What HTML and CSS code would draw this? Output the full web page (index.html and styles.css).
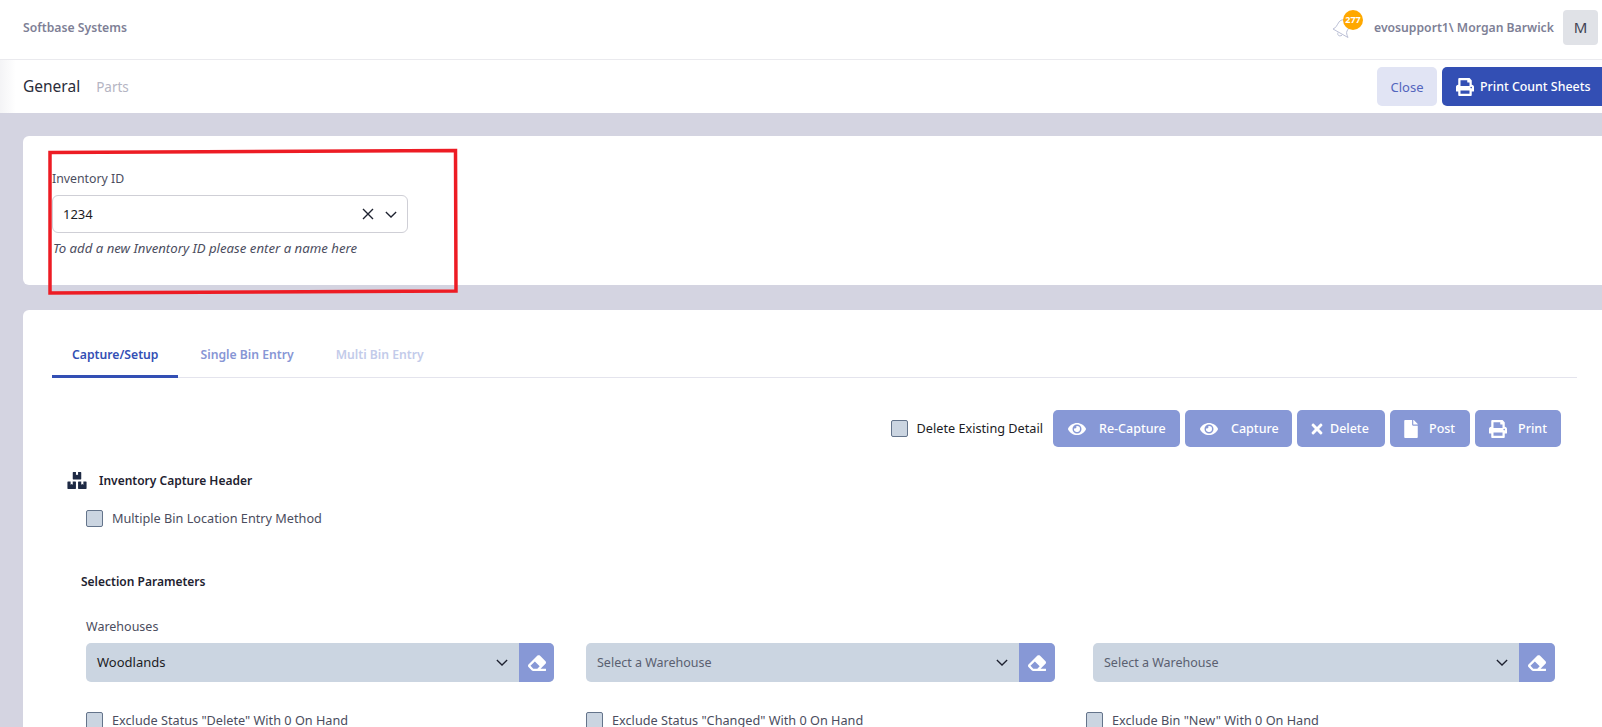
FILE: index.html
```html
<!DOCTYPE html>
<html lang="en">
<head>
<meta charset="utf-8">
<title>Softbase Systems</title>
<link rel="stylesheet" href="styles.css">
</head>
<body>
<svg class="defs" width="0" height="0" aria-hidden="true">
  <symbol id="i-print" viewBox="0 0 512 512"><path d="M448 192V77.25c0-8.49-3.37-16.62-9.37-22.63L393.37 9.37c-6-6-14.14-9.37-22.63-9.37H96C78.33 0 64 14.33 64 32v160c-35.35 0-64 28.65-64 64v112c0 8.84 7.16 16 16 16h48v96c0 17.67 14.33 32 32 32h320c17.67 0 32-14.33 32-32v-96h48c8.84 0 16-7.16 16-16V256c0-35.35-28.65-64-64-64zm-64 256H128v-96h256v96zm0-224H128V64h192v48c0 8.84 7.16 16 16 16h48v96zm48 72c-13.25 0-24-10.75-24-24 0-13.26 10.75-24 24-24s24 10.74 24 24c0 13.25-10.75 24-24 24z"/></symbol>
  <symbol id="i-eye" viewBox="0 0 576 512"><path d="M572.52 241.4C518.29 135.59 410.93 64 288 64S57.68 135.64 3.48 241.41a32.35 32.35 0 0 0 0 29.19C57.71 376.41 165.07 448 288 448s230.32-71.64 284.52-177.41a32.35 32.35 0 0 0 0-29.19zM288 400a144 144 0 1 1 144-144 143.93 143.93 0 0 1-144 144zm0-240a95.31 95.31 0 0 0-25.31 3.79 47.85 47.85 0 0 1-66.9 66.9A95.78 95.78 0 1 0 288 160z"/></symbol>
  <symbol id="i-times" viewBox="0 0 352 512"><path d="M242.72 256l100.07-100.07c12.28-12.28 12.28-32.19 0-44.48l-22.24-22.24c-12.28-12.28-32.19-12.28-44.48 0L176 189.28 75.93 89.21c-12.28-12.28-32.19-12.28-44.48 0L9.21 111.45c-12.28 12.28-12.28 32.19 0 44.48L109.28 256 9.21 356.07c-12.28 12.28-12.28 32.19 0 44.48l22.24 22.24c12.28 12.28 32.2 12.28 44.48 0L176 322.72l100.07 100.07c12.28 12.28 32.2 12.28 44.48 0l22.24-22.24c12.28-12.28 12.28-32.19 0-44.48L242.72 256z"/></symbol>
  <symbol id="i-file" viewBox="0 0 384 512"><path d="M224 136V0H24C10.7 0 0 10.7 0 24v464c0 13.3 10.7 24 24 24h336c13.3 0 24-10.7 24-24V160H248c-13.2 0-24-10.8-24-24zm160-14.1v6.1H256V0h6.1c6.4 0 12.5 2.5 17 7l97.9 98c4.5 4.5 7 10.6 7 16.9z"/></symbol>
  <symbol id="i-eraser" viewBox="0 0 512 512"><path d="M497.941 273.941c18.745-18.745 18.745-49.137 0-67.882l-160-160c-18.745-18.745-49.136-18.746-67.883 0l-256 256c-18.745 18.745-18.745 49.137 0 67.882l96 96A48.004 48.004 0 0 0 144 480h356c6.627 0 12-5.373 12-12v-40c0-6.627-5.373-12-12-12H355.883l142.058-142.059zm-302.627-62.627l137.373 137.373L265.373 416H150.628l-80-80 124.686-124.686z"/></symbol>
  <symbol id="i-boxes" viewBox="0 0 576 512"><path d="M560 288h-80v96l-32-21.3-32 21.3v-96h-80c-8.8 0-16 7.2-16 16v192c0 8.8 7.2 16 16 16h224c8.8 0 16-7.2 16-16V304c0-8.8-7.2-16-16-16zm-384-64h224c8.8 0 16-7.2 16-16V16c0-8.8-7.2-16-16-16h-80v96l-32-21.3L256 96V0h-80c-8.8 0-16 7.2-16 16v192c0 8.8 7.2 16 16 16zm64 64h-80v96l-32-21.3L96 384v-96H16c-8.8 0-16 7.2-16 16v192c0 8.8 7.2 16 16 16h224c8.8 0 16-7.2 16-16V304c0-8.8-7.2-16-16-16z"/></symbol>
  <symbol id="i-chev" viewBox="0 0 14 8"><path d="M1 1l6 6 6-6" fill="none" stroke="currentColor" stroke-width="1.5"/></symbol>
</svg>

<header class="topbar">
  <div class="brand">Softbase Systems</div>
  <div class="user">
    <div class="bell">
      <svg class="bell-icon" viewBox="0 0 20 21"><path d="M3 11C6 10 7 7 9 4C11 1 16 1 18 4C20 7 19 10 17 13C16 15 17 17 18 19.500ZM8 14.500C7 17 9 19 12 17.200" fill="#fff" stroke="#bcc0d6" stroke-width="1"/></svg>
      <span class="badge">277</span>
    </div>
    <span class="user-name">evosupport1\ Morgan Barwick</span>
    <span class="avatar">M</span>
  </div>
</header>

<nav class="subbar">
  <div class="subtabs">
    <span class="subtab-on">General</span>
    <span class="subtab-off">Parts</span>
  </div>
  <div class="subactions">
    <button class="btn-close">Close</button>
    <button class="btn-print"><svg class="ic-print"><use href="#i-print"/></svg>Print Count Sheets</button>
  </div>
</nav>

<main class="content">
  <section class="card card-id">
    <label class="id-label">Inventory ID</label>
    <div class="id-select">
      <span>1234</span>
      <span class="id-icons">
        <svg class="id-x" viewBox="0 0 12 12"><path d="M1 1l10 10M11 1L1 11" fill="none" stroke="currentColor" stroke-width="1.400"/></svg>
        <svg class="chev"><use href="#i-chev"/></svg>
      </span>
    </div>
    <p class="id-help">To add a new Inventory ID please enter a name here</p>
  </section>

  <section class="card card-main">
    <div class="tabs">
      <span class="tab tab-active">Capture/Setup</span>
      <span class="tab tab-mid">Single Bin Entry</span>
      <span class="tab tab-dim">Multi Bin Entry</span>
    </div>

    <div class="actions">
      <span class="check-wrap action-check"><i class="check"></i><span class="check-dark">Delete Existing Detail</span></span>
      <button class="act act-recapture"><svg class="ic-eye"><use href="#i-eye"/></svg>Re-Capture</button>
      <button class="act act-capture"><svg class="ic-eye"><use href="#i-eye"/></svg>Capture</button>
      <button class="act act-delete"><svg class="ic-times"><use href="#i-times"/></svg>Delete</button>
      <button class="act act-post"><svg class="ic-file"><use href="#i-file"/></svg>Post</button>
      <button class="act act-printb"><svg class="ic-printb"><use href="#i-print"/></svg>Print</button>
    </div>

    <h3 class="head"><svg class="ic-boxes"><use href="#i-boxes"/></svg>Inventory Capture Header</h3>
    <div class="check-wrap multi"><i class="check"></i><span>Multiple Bin Location Entry Method</span></div>

    <h4 class="params">Selection Parameters</h4>
    <div class="wh-label">Warehouses</div>
    <div class="wh-row">
      <div class="wh wh-1"><span class="wh-value">Woodlands</span><svg class="chev"><use href="#i-chev"/></svg><span class="wh-btn"><svg class="ic-eraser"><use href="#i-eraser"/></svg></span></div>
      <div class="wh wh-2"><span class="wh-ph">Select a Warehouse</span><svg class="chev"><use href="#i-chev"/></svg><span class="wh-btn"><svg class="ic-eraser"><use href="#i-eraser"/></svg></span></div>
      <div class="wh wh-3"><span class="wh-ph">Select a Warehouse</span><svg class="chev"><use href="#i-chev"/></svg><span class="wh-btn"><svg class="ic-eraser"><use href="#i-eraser"/></svg></span></div>
    </div>
    <div class="ex-row">
      <div class="check-wrap ex-1"><i class="check"></i><span>Exclude Status "Delete" With 0 On Hand</span></div>
      <div class="check-wrap ex-2"><i class="check"></i><span>Exclude Status "Changed" With 0 On Hand</span></div>
      <div class="check-wrap ex-3"><i class="check"></i><span>Exclude Bin "New" With 0 On Hand</span></div>
    </div>
  </section>
</main>

<svg class="annotation" viewBox="0 0 420 150" aria-hidden="true"><polygon points="3,5.500 408.500,3.500 409,144 3,146" fill="none" stroke="#ed1c24" stroke-width="3.500"/></svg>
</body>
</html>
```

FILE: styles.css
```css
* { box-sizing: border-box; }
html, body { margin: 0; height: 727px; overflow: hidden; }
body {
  font-family: "Noto Sans", "Open Sans", sans-serif;
  font-size: 13px;
  color: #3f4254;
  background: #fff;
  position: relative;
}
.defs { position: absolute; }
svg { fill: currentColor; display: block; flex: none; }
button { font-family: inherit; border: 0; cursor: pointer; }

/* top bar */
.topbar {
  height: 60px;
  display: flex;
  align-items: center;
  justify-content: space-between;
  padding: 0 4px 5px 23px;
  border-bottom: 1px solid #eaeaee;
}
.brand { font-weight: 600; font-size: 12.2px; color: #7e7f96; }
.user { display: flex; align-items: center; }
.bell { position: relative; width: 42px; height: 34px; margin-right: 10px; }
.bell-icon { position: absolute; left: 8px; top: 8px; width: 20px; height: 21px; }
.badge {
  position: absolute; left: 21px; top: 0;
  width: 20px; height: 20px; border-radius: 50%;
  background: #ffa800; color: #fff;
  font-size: 9px; font-weight: 700; line-height: 20px; text-align: center;
}
.user-name { font-weight: 600; font-size: 12.2px; color: #7e7f96; width: 189px; }
.avatar {
  width: 35px; height: 35px; border-radius: 4px;
  background: #e0e2e7; color: #3f4254;
  font-size: 15px; line-height: 35px; text-align: center;
}

/* sub bar */
.subbar {
  height: 53px;
  display: flex;
  align-items: center;
  justify-content: space-between;
  padding-left: 23px;
  background: linear-gradient(90deg, #f4f4f6 0, #fff 16px);
}
.subtabs { display: flex; align-items: baseline; gap: 16px; margin-top: -2px; }
.subtab-on { font-size: 15.5px; color: #2b2d3a; }
.subtab-off { font-size: 13.5px; color: #b5b5c3; }
.subactions { display: flex; gap: 5px; }
.btn-close {
  width: 60px; height: 39px; border-radius: 5px;
  background: #e1e4f4; color: #5365bd; font-size: 13px; padding: 0;
}
.btn-print {
  width: 160px; height: 39px; border-radius: 5px 0 0 5px;
  background: #334fb4; color: #fff; font-size: 12.4px; font-weight: 500;
  display: flex; align-items: center; gap: 6px; padding: 0 0 0 14px; white-space: nowrap;
}
.ic-print { width: 18px; height: 18px; }

/* content */
.content { background: #d4d4e1; height: 614px; padding: 23px 0 0 23px; }
.card { background: #fff; border-radius: 6px 0 0 6px; }
.card-id { height: 149px; padding: 34px 0 0 29px; margin-bottom: 25px; }
.id-label { display: block; font-size: 12.3px; line-height: 18px; color: #4b4d5e; }
.id-select {
  width: 356px; height: 38px; margin-top: 7px;
  border: 1px solid #cfcfd6; border-radius: 6px;
  display: flex; align-items: center; justify-content: space-between;
  padding: 0 10px 0 10px; color: #1c1c24; font-size: 13px;
}
.id-icons { display: flex; align-items: center; gap: 11px; color: #1e2230; }
.id-x { width: 12px; height: 12px; }
.chev { width: 12px; height: 7px; color: #1e2230; }
.id-help { margin: 6px 0 0 1px; font-size: 13.2px; font-style: italic; line-height: 18px; color: #4b4d5e; }

.card-main { height: 417px; padding: 25px 0 0 29px; border-radius: 6px 0 0 0; }
.tabs { width: 1525px; height: 43px; border-bottom: 1px solid #e4e4ed; display: flex; }
.tab { font-size: 12.2px; font-weight: 600; line-height: 40px; height: 43px; padding: 0 20px; margin-right: 2px; white-space: nowrap; }
.tab-active { color: #334fb4; border-bottom: 3px solid #334fb4; }
.tab-mid { color: #8796d5; }
.tab-dim { color: #c3cbea; }

.actions { display: flex; align-items: center; justify-content: flex-end; gap: 5px; width: 1509px; margin-top: 32px; height: 37px; }
.act {
  height: 37px; border-radius: 5px; background: #8798d6; color: #fff;
  font-size: 12.5px; font-weight: 500; display: flex; align-items: center; padding: 0 0 0 14px; white-space: nowrap;
}
.act-recapture { width: 127px; gap: 12px; }
.act-capture { width: 107px; gap: 12px; }
.act-delete { width: 88px; gap: 7px; }
.act-post { width: 80px; gap: 11px; }
.act-printb { width: 86px; gap: 11px; }
.ic-eye { width: 20px; height: 16px; }
.ic-times { width: 12px; height: 16px; }
.ic-file { width: 14px; height: 18px; }
.ic-printb { width: 18px; height: 18px; }

.check-wrap { display: flex; align-items: center; gap: 9px; font-size: 12.7px; color: #4b4d5e; white-space: nowrap; }
.check { display: block; width: 17px; height: 17px; border-radius: 2px; background: #cbd5e1; border: 1px solid #64748b; flex: none; }
.action-check { margin-right: 5px; }
.check-dark { color: #1c1c24; font-size: 12.7px; margin-bottom: 2px; }

.head { margin: 23px 0 0 15px; height: 20px; display: flex; align-items: center; gap: 12px; font-size: 12px; font-weight: 600; color: #1e2230; }
.ic-boxes { width: 20px; height: 17px; color: #1e2a44; }
.multi { margin: 18px 0 0 34px; height: 20px; }
.params { margin: 44px 0 0 29px; font-size: 12px; font-weight: 600; line-height: 20px; color: #1e2230; }
.wh-label { margin: 26px 0 0 34px; font-size: 12.5px; line-height: 18px; color: #4b4d5e; }
.wh-row { display: flex; margin: 7px 0 0 34px; }
.wh {
  height: 39px; border-radius: 5px; background: #cbd5e1;
  display: flex; align-items: center; padding-left: 11px; overflow: hidden;
}
.wh-1 { width: 468px; margin-right: 32px; }
.wh-2 { width: 469px; margin-right: 38px; }
.wh-3 { width: 462px; }
.wh-value { flex: 1; color: #1c1c24; font-size: 13px; margin-bottom: 2px; }
.wh-ph { flex: 1; color: #5a6070; font-size: 12.5px; }
.wh .chev { margin-right: 11px; }
.wh-btn { width: 35px; height: 39px; background: #8798d6; color: #fff; display: flex; align-items: center; justify-content: center; flex: none; }
.wh-2 .wh-btn, .wh-3 .wh-btn { width: 36px; }
.ic-eraser { width: 18px; height: 18px; }
.ex-row { display: flex; margin: 29px 0 0 34px; }
.ex-row .check-wrap { height: 18px; }
.ex-1 { width: 500px; }
.ex-2 { width: 500px; }

/* hand-drawn annotation over the screenshot */
.annotation { position: absolute; left: 47px; top: 147px; width: 420px; height: 150px; }
```
